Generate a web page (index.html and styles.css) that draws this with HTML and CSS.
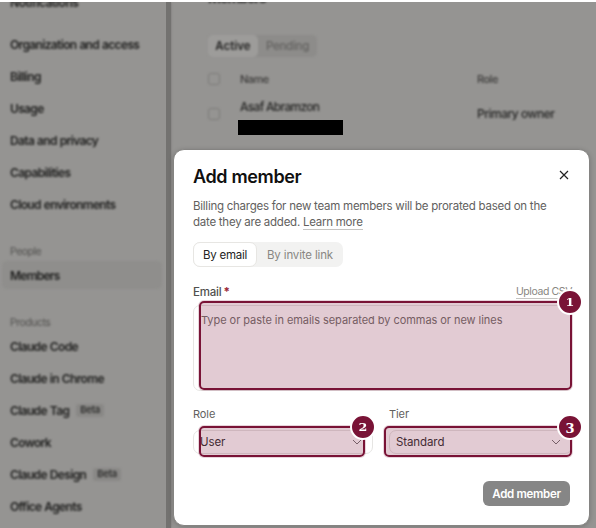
FILE: index.html
```html
<!DOCTYPE html>
<html lang="en">
<head>
<meta charset="utf-8">
<title>Add member</title>
<link rel="stylesheet" href="styles.css">
</head>
<body>
<div class="screen">
  <div class="page">
    <nav class="sidebar">
      <div class="item first">Notifications</div>
      <div class="item">Organization and access</div>
      <div class="item">Billing</div>
      <div class="item">Usage</div>
      <div class="item">Data and privacy</div>
      <div class="item">Capabilities</div>
      <div class="item">Cloud environments</div>
      <div class="group">People</div>
      <div class="item active">Members</div>
      <div class="group">Products</div>
      <div class="item">Claude Code</div>
      <div class="item">Claude in Chrome</div>
      <div class="item">Claude Tag <span class="beta">Beta</span></div>
      <div class="item">Cowork</div>
      <div class="item">Claude Design <span class="beta">Beta</span></div>
      <div class="item">Office Agents</div>
    </nav>
    <main class="content">
      <h2>Members</h2>
      <div class="page-tabs"><span class="on">Active</span><span class="off">Pending</span></div>
      <div class="row head"><i class="check"></i><span class="name">Name</span><span>Role</span></div>
      <div class="row"><i class="check"></i><span class="name">Asaf Abramzon</span><span>Primary owner</span></div>
    </main>
  </div>
  <div class="redaction"></div>
  <section class="modal">
    <header><h1>Add member</h1>
      <svg class="close" width="10" height="10" viewBox="0 0 10 10"><path d="M1 1l8 8M9 1L1 9"/></svg>
    </header>
    <p class="desc">Billing charges for new team members will be prorated based on the<br>date they are added. <a>Learn more</a></p>
    <div class="tabs"><span class="tab selected">By email</span><span class="tab">By invite link</span></div>
    <div class="labels"><span class="email-label">Email<b>*</b></span><a class="upload">Upload CSV</a></div>
    <div class="field area"><span>Type or paste in emails separated by commas or new lines</span>
      <div class="mark mark-email"><i class="badge"><span>1</span></i></div>
    </div>
    <div class="selects">
      <div class="col role"><label>Role</label>
        <div class="field select"><span>User</span><svg class="chev" width="10" height="6" viewBox="0 0 10 6"><path d="M1 1l4 4 4-4"/></svg>
          <div class="mark mark-role"><i class="badge"><span>2</span></i></div></div>
      </div>
      <div class="col tier"><label>Tier</label>
        <div class="field select"><span>Standard</span><svg class="chev" width="10" height="6" viewBox="0 0 10 6"><path d="M1 1l4 4 4-4"/></svg>
          <div class="mark mark-tier"><i class="badge low"><span>3</span></i></div></div>
      </div>
    </div>
    <footer><button>Add member</button></footer>
  </section>
</div>
</body>
</html>
```

FILE: styles.css
```css
* { box-sizing: border-box; }
body { margin: 0; background: #fff; font-family: Inter, "Liberation Sans", sans-serif; }
.screen { position: relative; width: 596px; height: 528px; padding-top: 2px; overflow: hidden; }
.page { display: flex; width: 596px; height: 526px; background: #959492; overflow: hidden; }
.sidebar { width: 171px; height: 526px; flex: none; padding-left: 2px; border-right: 5px solid #737270; box-shadow: 0 0 2px #737270; }
.item { height: 32px; width: 160px; padding-left: 8px; display: flex; align-items: center; font-size: 12px; font-weight: 600; letter-spacing: -0.65px; word-spacing: 0.5px; color: #20201f; white-space: nowrap; filter: blur(1.3px); }
.item.first { margin-top: -16px; margin-bottom: 10px; letter-spacing: -0.45px; }
.group { height: 20px; margin-top: 22px; padding-left: 8px; font-size: 10.5px; line-height: 20px; letter-spacing: -0.5px; color: #51504e; filter: blur(1.1px); }
.item.active { height: 28px; margin-top: -1px; background: #8f8e8c; border-radius: 5px; letter-spacing: -0.75px; }
.active + .group { margin-top: 24px; }
.group + .item:not(.active) { margin-top: -3px; }
.beta { margin-left: 7px; padding: 0 4px; height: 13px; line-height: 12px; font-size: 9.5px; font-weight: 500; background: #898886; border-radius: 3px; letter-spacing: -0.2px; }
.content { flex: 1; padding-left: 37px; filter: blur(1.2px); color: #252524; }
.content h2 { margin: -15px 0 0; height: 48px; font-size: 14px; line-height: 22px; letter-spacing: -1px; }
.page-tabs { display: flex; width: 109px; height: 22px; background: #8d8c8a; border-radius: 5px; line-height: 22px; font-size: 11.5px; font-weight: 600; }
.page-tabs .on { width: 50px; text-align: center; background: #9d9c9a; border-radius: 5px; }
.page-tabs .off { flex: 1; text-align: center; color: #62615f; font-weight: 500; letter-spacing: -0.3px; }
.row { display: flex; align-items: center; height: 35px; font-size: 12px; font-weight: 500; letter-spacing: -0.5px; }
.row.head { height: 44px; margin-bottom: -5px; font-size: 11px; color: #3c3b3a; }
.check { width: 12px; height: 12px; border: 1px solid #7c7b79; border-radius: 3px; margin-right: 20px; }
.name { width: 237px; }
.row:last-child .name { padding-bottom: 14px; letter-spacing: -0.7px; }
.redaction { position: absolute; left: 238px; top: 120px; width: 105px; height: 15px; background: #000; }
.modal { position: absolute; left: 173px; top: 149px; width: 417px; height: 377px; border-radius: 11px; background: #fff; border: 1px solid #858482; padding: 14px 17px 0 19px; box-shadow: 0 1px 5px #0003; }
header { display: flex; justify-content: space-between; align-items: center; height: 24px; }
h1 { margin: 0; padding-top: 1px; font-size: 18px; font-weight: 600; letter-spacing: -0.35px; color: #101010; }
.close { margin-right: 3px; margin-top: -3px; fill: none; stroke: #222; stroke-width: 1.2; }
.desc { margin: 10px 0 0; font-size: 11.5px; line-height: 16px; letter-spacing: -0.25px; color: #62615e; white-space: nowrap; }
a { border-bottom: 1px solid #c6c5c2; }
.desc a { display: inline-block; line-height: 14px; }
.tabs { display: flex; width: 150px; height: 25px; margin-top: 12px; background: #f2f2f1; border-radius: 7px; font-size: 11.5px; line-height: 26px; }
.tab { flex: 1; text-align: center; color: #898783; white-space: nowrap; letter-spacing: -0.15px; }
.tab.selected { flex: none; width: 64px; border: 1px solid #e7e6e3; border-radius: 7px; background: #fff; color: #242423; line-height: 24px; letter-spacing: -0.25px; }
.labels { display: flex; justify-content: space-between; align-items: center; height: 16px; margin-top: 17px; font-size: 11.5px; font-weight: 500; color: #50504e; }
.email-label { letter-spacing: -0.2px; }
.labels b { margin-left: 2px; color: #9b2938; }
.upload { font-size: 10.5px; line-height: 12px; font-weight: 400; letter-spacing: -0.4px; color: #898783; }
.field { position: relative; border: 1px solid #e6e5e3; border-radius: 7px; }
.area { height: 86px; margin-top: 5px; padding: 6px 7px; font-size: 11px; line-height: 16px; letter-spacing: -0.05px; color: #74736f; }
.mark { position: absolute; border: 2px solid #791336; border-radius: 5px; background: rgba(121,19,54,.22); box-shadow: 0 0 0 1px rgba(121,19,54,.18); }
.badge { position: absolute; right: -13px; top: -14px; width: 26px; height: 26px; border: 2px solid #fff; border-radius: 50%; background: #791336; color: #fff; font: bold 11px/24px "DejaVu Serif", serif; text-align: center; }
.badge span { display: inline-block; transform: scaleX(1.15); }
.badge.low { font-size: 13px; line-height: 25px; }
.badge.low span { transform: none; }
.mark-email { left: 5px; top: -5px; width: 373px; height: 89px; }
.mark-role { left: 5px; top: -5px; width: 166px; height: 31px; }
.mark-tier { left: -6px; top: -5px; width: 188px; height: 31px; }
.selects { display: flex; gap: 16px; margin-top: 15px; }
.col { width: 180px; }
.tier { width: 183px; }
label { display: block; height: 16px; line-height: 16px; font-size: 11px; letter-spacing: -0.1px; color: #62615e; }
.select { display: flex; align-items: center; justify-content: space-between; height: 24px; margin-top: 8px; padding: 0 10px 0 6px; font-size: 11.5px; letter-spacing: -0.1px; color: #333; }
.chev { fill: none; stroke: #777; }
footer { display: flex; justify-content: flex-end; margin-top: 27px; }
button { width: 87px; height: 25px; margin-right: 2px; padding: 0; border: 0; border-radius: 6px; background: #868686; color: #fff; font: 600 11.5px Inter, sans-serif; letter-spacing: -0.3px; }
```
